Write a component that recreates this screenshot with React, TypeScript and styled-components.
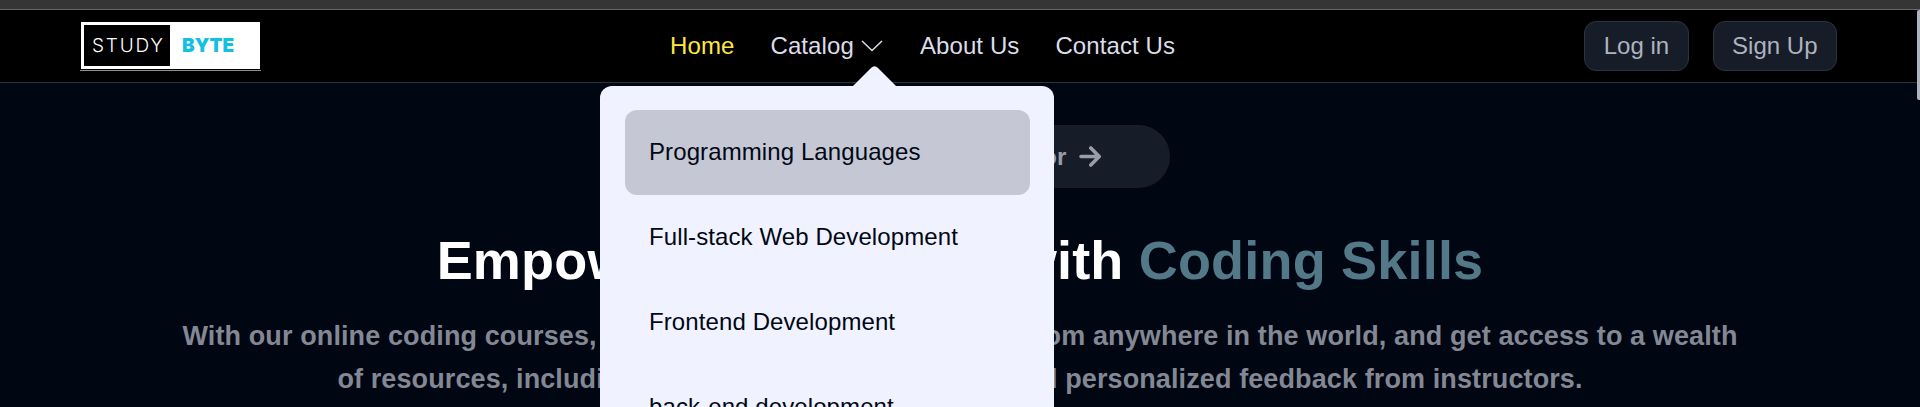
import React from 'react';
import styled, { createGlobalStyle } from 'styled-components';

const GlobalStyle = createGlobalStyle`
  * { box-sizing: border-box; }
  html, body, #root { height: 100%; }
  body {
    margin: 0;
    overflow: hidden;
    background: #000612;
    font-family: "Liberation Sans", Arial, sans-serif;
  }
`;

const Page = styled.div`
  position: relative;
  height: 407px;
  overflow: hidden;
  background: #000612;
`;

const WindowEdge = styled.div`
  height: 10px;
  background: #353535;
  border-bottom: 1px solid #686868;
`;

const ScrollThumb = styled.div`
  position: absolute;
  top: 10px;
  right: 0;
  width: 3px;
  height: 90px;
  border-radius: 2px 0 0 2px;
  background: #afb2bf;
`;

const Navbar = styled.header`
  display: flex;
  justify-content: space-between;
  align-items: center;
  height: 73px;
  padding: 0 83px 0 80px;
  background: #000;
  border-bottom: 1px solid #2c333f;
`;

const Logo = styled.a`
  display: flex;
  flex-direction: column;
  align-items: center;
  width: 181px;
  margin-top: 1px;
  border-bottom: 1px solid #8f8f8f;
  padding-bottom: 1px;
`;

const LogoPlate = styled.span`
  display: flex;
  align-items: stretch;
  width: 179px;
  height: 47px;
  padding: 3px;
  background: #fff;
`;

const LogoDark = styled.span`
  width: 86px;
  padding-left: 8px;
  background: #000;
  color: #fff;
  font: 350 19px/41px Inter, sans-serif;
  letter-spacing: 1.8px;
`;

const LogoLight = styled.span`
  padding-left: 12px;
  color: #12c0df;
  font: 900 19px/41px Inter, sans-serif;
`;

const Links = styled.nav`
  display: flex;
  align-items: center;
  gap: 36px;
  height: 72px;
`;

const NavLink = styled.a<{ $active?: boolean }>`
  display: flex;
  align-items: center;
  gap: 6px;
  font-size: 24px;
  line-height: 36px;
  letter-spacing: 0.1px;
  white-space: nowrap;
  color: ${({ $active }) => ($active ? '#ffe83d' : '#dbddea')};
`;

const Actions = styled.div`
  display: flex;
  gap: 24px;
`;

const ActionButton = styled.button`
  height: 50px;
  padding: 0 18.5px;
  border: 1px solid #2c333f;
  border-radius: 12px;
  background: #161d29;
  color: #afb2bf;
  font: 24px/36px "Liberation Sans", Arial, sans-serif;
`;

const Menu = styled.div`
  position: absolute;
  z-index: 10;
  top: 86px;
  left: 600px;
  width: 454px;
  height: 420px;
  padding: 24px 24px 24px 25px;
  border-radius: 12px;
  background: #f1f2ff;
`;

const MenuPointer = styled.svg`
  position: absolute;
  top: -20px;
  left: 252px;
`;

const MenuItem = styled.a<{ $hovered?: boolean }>`
  display: block;
  height: 85px;
  padding: 24px;
  border-radius: 12px;
  background: ${({ $hovered }) => ($hovered ? '#c5c7d4' : 'transparent')};
  color: #000814;
  font-size: 24px;
  line-height: 36px;
  letter-spacing: 0.1px;
`;

const Hero = styled.main`
  display: flex;
  flex-direction: column;
  align-items: center;
  padding-top: 42px;
`;

const InstructorPill = styled.a`
  display: flex;
  align-items: center;
  justify-content: center;
  gap: 12px;
  width: 420px;
  height: 63px;
  padding-left: 2px;
  border-radius: 32px;
  background: #161d29;
  color: #999daa;
  font-size: 24px;
  font-weight: 700;
`;

const Title = styled.h1`
  margin: 42px 0 0;
  font-size: 54px;
  line-height: 60px;
  letter-spacing: 0.2px;
  font-weight: 700;
  color: #fff;
  white-space: nowrap;
`;

const Accent = styled.span`
  color: #537888;
`;

const Lead = styled.p`
  margin: 25px 0 0;
  font-size: 27px;
  line-height: 43px;
  letter-spacing: 0.11px;
  font-weight: 700;
  text-align: center;
  white-space: nowrap;
  color: #838894;
`;

const topics = [
  'Programming Languages',
  'Full-stack Web Development',
  'Frontend Development',
  'back-end development',
];

export default function App() {
  return (
    <Page>
      <GlobalStyle />
      <WindowEdge />
      <ScrollThumb />
      <Navbar>
        <Logo>
          <LogoPlate>
            <LogoDark>STUDY</LogoDark>
            <LogoLight>BYTE</LogoLight>
          </LogoPlate>
        </Logo>
        <Links>
          <NavLink $active>Home</NavLink>
          <NavLink>
            Catalog
            <svg width="24" height="12" viewBox="0 0 24 12" fill="none" stroke="currentColor" strokeWidth="1.5">
              <path d="M2 1 L12 10.5 L22 1" />
            </svg>
          </NavLink>
          <NavLink>About Us</NavLink>
          <NavLink>Contact Us</NavLink>
        </Links>
        <Actions>
          <ActionButton>Log in</ActionButton>
          <ActionButton>Sign Up</ActionButton>
        </Actions>
      </Navbar>
      <Menu>
        <MenuPointer width="46" height="21" viewBox="0 0 46 21" fill="#f1f2ff">
          <path d="M0 21 L19 2 Q22.5 -1.5 26 2 L45 21 Z" />
        </MenuPointer>
        {topics.map((topic, index) => (
          <MenuItem key={topic} $hovered={index === 0}>{topic}</MenuItem>
        ))}
      </Menu>
      <Hero>
        <InstructorPill>
          Become an Instructor
          <svg width="24" height="21" viewBox="0 0 24 21" fill="none" stroke="currentColor" strokeWidth="3.6" strokeLinecap="round" strokeLinejoin="round">
            <path d="M3 10.5 H21 M12.8 2 L21.2 10.5 L12.8 19" />
          </svg>
        </InstructorPill>
        <Title>
          Empower Your Future with <Accent>Coding Skills</Accent>
        </Title>
        <Lead>
          With our online coding courses, you can learn at your own pace, from anywhere in the world, and get access to a wealth
          <br />
          of resources, including hands-on projects, quizzes, and personalized feedback from instructors.
        </Lead>
      </Hero>
    </Page>
  );
}
